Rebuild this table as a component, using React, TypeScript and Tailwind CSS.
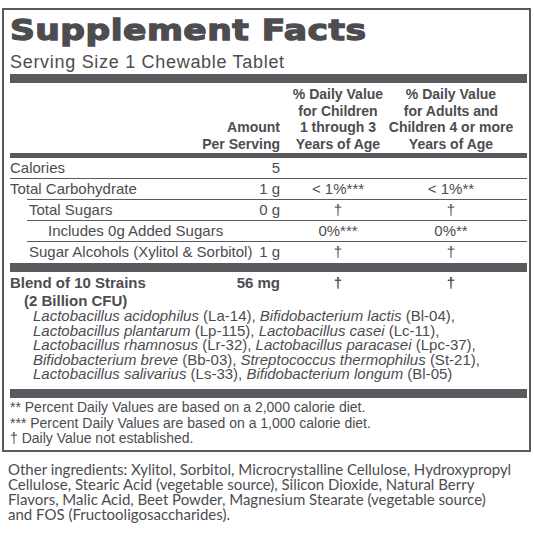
const ink = "text-[#4d4c50]";

function Line({ indent = false }: { indent?: boolean }) {
  return <div className={`h-px bg-[#5a595d] ${indent ? "ml-[17px]" : ""}`} />;
}

function Row({
  label,
  amount,
  child,
  adult,
  pad = "",
}: {
  label: string;
  amount?: string;
  child?: string;
  adult?: string;
  pad?: string;
}) {
  return (
    <div className="flex h-[20px] items-center text-[15px] leading-[20px]">
      <div className={`flex-1 whitespace-nowrap ${pad}`}>{label}</div>
      <div className="text-right whitespace-nowrap">{amount}</div>
      <div className="flex w-[116px] justify-center whitespace-nowrap">{child}</div>
      <div className="flex w-[110px] justify-center whitespace-nowrap">{adult}</div>
      <div className="w-[21px]" />
    </div>
  );
}

const strains: [string, string][][] = [
  [
    ["Lactobacillus acidophilus", "(La-14), "],
    ["Bifidobacterium lactis", "(Bl-04),"],
  ],
  [
    ["Lactobacillus plantarum", "(Lp-115), "],
    ["Lactobacillus casei", "(Lc-11),"],
  ],
  [
    ["Lactobacillus rhamnosus", "(Lr-32), "],
    ["Lactobacillus paracasei", "(Lpc-37),"],
  ],
  [
    ["Bifidobacterium breve", "(Bb-03), "],
    ["Streptococcus thermophilus", "(St-21),"],
  ],
  [
    ["Lactobacillus salivarius", "(Ls-33), "],
    ["Bifidobacterium longum", "(Bl-05)"],
  ],
];

export default function App() {
  return (
    <div className={`h-[534px] w-[534px] overflow-hidden bg-white pt-[8px] pl-[2px] font-['Liberation_Sans',Arial,sans-serif] ${ink}`}>
      <div className="w-[529px] border-2 border-[#5a595d] pl-[6px] pr-[2px]">
        <div className="pt-[4px] h-[36px]">
          <h1 className="inline-block origin-left scale-x-[1.19] whitespace-nowrap font-['DejaVu_Sans',sans-serif] text-[29px] font-bold leading-[32px] tracking-[0.4px] [-webkit-text-stroke:1.3px_#4d4c50]">
            Supplement Facts
          </h1>
        </div>
        <div className="mt-[6px] text-[18px] leading-[20px] tracking-[0.7px]">Serving Size 1 Chewable Tablet</div>
        <div className="mt-[2px] h-[9px] bg-[#5a595d]" />

        <div className="flex items-end pt-[3px] pb-[1px] text-[14px] font-bold leading-[16.5px]">
          <div className="flex-1" />
          <div className="text-right whitespace-nowrap">
            <div>Amount</div>
            <div>Per Serving</div>
          </div>
          <div className="flex w-[116px] flex-col items-center whitespace-nowrap">
            <div>% Daily Value</div>
            <div>for Children</div>
            <div>1 through 3</div>
            <div>Years of Age</div>
          </div>
          <div className="flex w-[110px] flex-col items-center whitespace-nowrap">
            <div>% Daily Value</div>
            <div>for Adults and</div>
            <div>Children 4 or more</div>
            <div>Years of Age</div>
          </div>
          <div className="w-[21px]" />
        </div>
        <div className="h-[5px] bg-[#5a595d]" />

        <Row label="Calories" amount="5" />
        <Line />
        <Row label="Total Carbohydrate" amount="1 g" child="< 1%***" adult="< 1%**" />
        <Line indent />
        <Row label="Total Sugars" amount="0 g" child="†" adult="†" pad="pl-[19px]" />
        <Line indent />
        <Row label="Includes 0g Added Sugars" child="0%***" adult="0%**" pad="pl-[38px]" />
        <Line indent />
        <Row label="Sugar Alcohols (Xylitol & Sorbitol)" amount="1 g" child="†" adult="†" pad="pl-[19px]" />
        <div className="mt-[1px] h-[9px] bg-[#5a595d]" />

        <div className="pt-[2px] pb-[7px]">
          <div className="flex text-[15px] font-bold leading-[18px]">
            <div className="flex-1">Blend of 10 Strains</div>
            <div className="text-right">56 mg</div>
            <div className="flex w-[116px] justify-center">†</div>
            <div className="flex w-[110px] justify-center">†</div>
            <div className="w-[21px]" />
          </div>
          <div className="pl-[14px] text-[15px] font-bold leading-[18px]">(2 Billion CFU)</div>
          <div className="-mt-[1px] pl-[23px] text-[15px] leading-[14.5px] whitespace-nowrap">
            {strains.map((line, i) => (
              <div key={i}>
                {line.map(([name, code], j) => (
                  <span key={j}>
                    <i>{name}</i> {code}
                  </span>
                ))}
              </div>
            ))}
          </div>
        </div>
        <div className="h-[9px] bg-[#5a595d]" />

        <div className="pt-[2.5px] pb-[3px] text-[14px] leading-[15.5px]">
          <div>** Percent Daily Values are based on a 2,000 calorie diet.</div>
          <div>*** Percent Daily Values are based on a 1,000 calorie diet.</div>
          <div>† Daily Value not established.</div>
        </div>
      </div>

      <p className="mt-[10px] pl-[6px] whitespace-nowrap font-['Lato',sans-serif] text-[15px] leading-[15px]">
        Other ingredients: Xylitol, Sorbitol, Microcrystalline Cellulose, Hydroxypropyl
        <br />
        Cellulose, Stearic Acid (vegetable source), Silicon Dioxide, Natural Berry
        <br />
        Flavors, Malic Acid, Beet Powder, Magnesium Stearate (vegetable source)
        <br />
        and FOS (Fructooligosaccharides).
      </p>
    </div>
  );
}
